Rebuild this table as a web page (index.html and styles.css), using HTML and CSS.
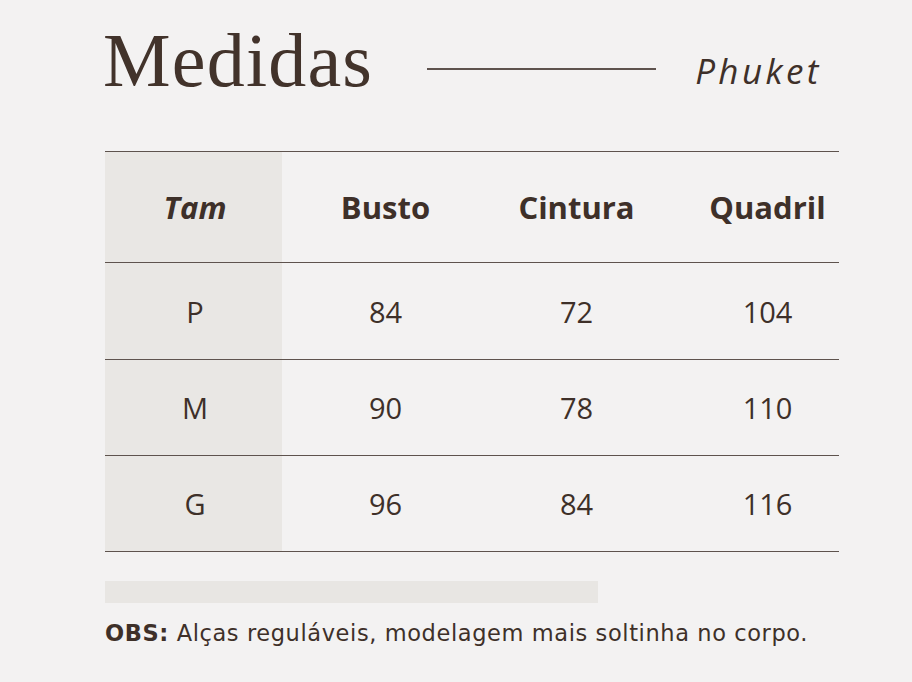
FILE: index.html
```html
<!DOCTYPE html>
<html lang="pt">
<head>
<meta charset="utf-8">
<title>Medidas - Phuket</title>
<link rel="stylesheet" href="styles.css">
</head>
<body>
<div class="page">
  <header class="head">
    <h1 class="title">Medidas</h1>
    <span class="rule"></span>
    <span class="model">Phuket</span>
  </header>
  <div class="table">
    <div class="row row-head">
      <div class="cell first tam">Tam</div>
      <div class="cell">Busto</div>
      <div class="cell">Cintura</div>
      <div class="cell last">Quadril</div>
    </div>
    <div class="row row-tall">
      <div class="cell first">P</div>
      <div class="cell">84</div>
      <div class="cell">72</div>
      <div class="cell last">104</div>
    </div>
    <div class="row">
      <div class="cell first">M</div>
      <div class="cell">90</div>
      <div class="cell">78</div>
      <div class="cell last">110</div>
    </div>
    <div class="row">
      <div class="cell first">G</div>
      <div class="cell">96</div>
      <div class="cell">84</div>
      <div class="cell last">116</div>
    </div>
  </div>
  <div class="bar"></div>
  <p class="obs"><b>OBS:</b> Alças reguláveis, modelagem mais soltinha no corpo.</p>
</div>
</body>
</html>
```

FILE: styles.css
```css
html, body {
  margin: 0;
  padding: 0;
  background: #f3f2f2;
}
body {
  width: 912px;
  height: 682px;
  overflow: hidden;
  color: #3e3029;
  font-family: "Open Sans", "Liberation Sans", sans-serif;
}
.page {
  padding: 0 73px 0 105px;
}
.head {
  display: flex;
  align-items: flex-start;
  height: 151px;
  box-sizing: border-box;
}
.title {
  margin: 22px 0 0 -2px;
  font-family: "Liberation Serif", "DejaVu Serif", serif;
  font-weight: 400;
  font-size: 76px;
  line-height: 1;
  color: #42332b;
  letter-spacing: 1.2px;
}
.rule {
  width: 229px;
  height: 2px;
  background: #5e534e;
  margin-left: 54px;
  margin-top: 68px;
}
.model {
  margin-left: 39px;
  margin-top: 47px;
  font-style: italic;
  font-size: 35px;
  line-height: 48px;
  letter-spacing: 3.4px;
  color: #3e3029;
}
.table {
  border-top: 1px solid #5e534e;
}
.row {
  display: grid;
  grid-template-columns: 185px 191px 191px 167px;
  height: 96px;
  box-sizing: border-box;
  border-bottom: 1px solid #5e534e;
  font-size: 29px;
}
.row-tall {
  height: 97px;
}
.row-head {
  height: 111px;
  font-weight: 700;
  font-size: 31px;
}
.cell {
  display: flex;
  align-items: center;
  justify-content: center;
}
.first {
  margin-right: 8px;
  background: #e9e7e4;
  padding-left: 3px;
}
.last {
  padding-left: 24px;
}
.tam {
  font-style: italic;
}
.bar {
  margin-top: 29px;
  width: 493px;
  height: 22px;
  background: #e8e6e3;
}
.obs {
  margin: 17px 0 0 0;
  font-family: "DejaVu Sans", "Open Sans", sans-serif;
  font-size: 22.5px;
  letter-spacing: 0.6px;
  color: #3e3029;
}
.obs b {
  font-weight: 700;
}
```
